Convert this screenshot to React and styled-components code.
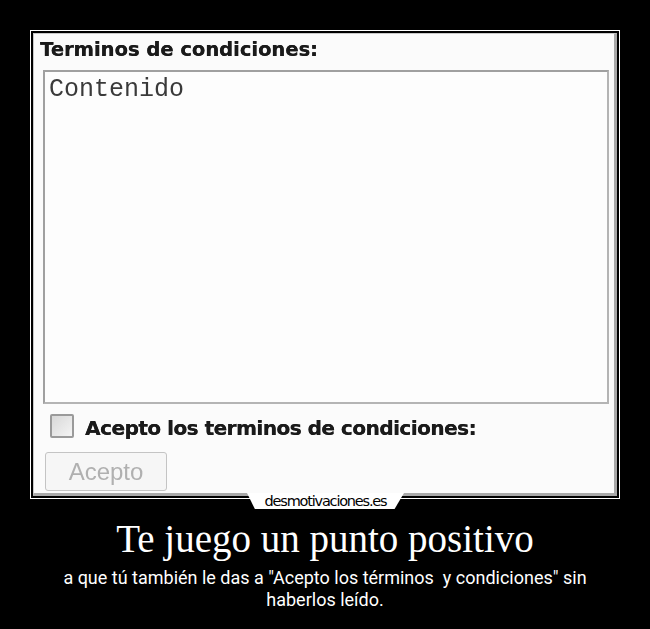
import React from 'react';
import styled, { createGlobalStyle } from 'styled-components';

const GlobalStyle = createGlobalStyle`
  body {
    margin: 0;
    background: #000;
  }
`;

const Page = styled.div`
  width: 650px;
  height: 629px;
  background: #000;
  padding-top: 30px;
  box-sizing: border-box;
  overflow: hidden;
`;

const Frame = styled.div`
  position: relative;
  width: 590px;
  height: 469px;
  margin-left: 30px;
  box-sizing: border-box;
  border: 1px solid #fff;
  padding: 2px;
  background: #000;
`;

const Shot = styled.div`
  height: 100%;
  box-sizing: border-box;
  background: #fbfbfb;
  border: 1px solid #c8c8c8;
  border-right: 3px solid #a9a9a9;
  border-bottom: 3px solid #a9a9a9;
  display: flex;
  flex-direction: column;
  filter: blur(0.35px);
`;

const Heading = styled.div`
  font-family: 'DejaVu Sans', Verdana, sans-serif;
  font-weight: bold;
  font-size: 19.5px;
  letter-spacing: 0;
  color: #1a1a1a;
  text-shadow: 0.3px 0 0 #1a1a1a;
  margin: 4px 0 0 6px;
  line-height: 24px;
`;

const TextArea = styled.div`
  margin: 8px 0 0 9px;
  width: 566px;
  height: 334px;
  box-sizing: border-box;
  border: 2px solid #b4b4b4;
  border-top-color: #a0a0a0;
  border-left-color: #a0a0a0;
  background: #fdfdfd;
  padding: 5px 4px;
  font-family: 'Liberation Mono', 'Courier New', monospace;
  font-size: 25px;
  line-height: 26px;
  color: #3a3a3a;
`;

const AgreeRow = styled.label`
  display: flex;
  align-items: center;
  gap: 11px;
  margin: 8px 0 0 16px;
`;

const Box = styled.span`
  width: 24px;
  height: 24px;
  box-sizing: border-box;
  border: 2px solid #9a9a9a;
  border-radius: 2px;
  background: linear-gradient(135deg, #d8d8d8, #f4f4f4);
`;

const AgreeText = styled.span`
  font-family: 'DejaVu Sans', Verdana, sans-serif;
  font-weight: bold;
  font-size: 20px;
  letter-spacing: -0.5px;
  color: #1a1a1a;
  text-shadow: 0.3px 0 0 #1a1a1a;
  margin-top: 4px;
`;

const Button = styled.button`
  margin: 12px 0 0 11px;
  width: 122px;
  height: 39px;
  border: 1px solid #c4c4c4;
  border-radius: 3px;
  background: #f6f6f6;
  font-family: 'Liberation Sans', Arial, sans-serif;
  font-size: 24px;
  color: #b0b0b0;
  padding: 0;
`;

const Badge = styled.div`
  position: absolute;
  left: 216px;
  bottom: -11px;
  width: 157px;
  height: 16px;
  background: #fff;
  clip-path: polygon(0 0, 100% 0, 94% 100%, 5% 100%);
  display: flex;
  align-items: center;
  justify-content: center;
  font-family: 'DejaVu Sans', sans-serif;
  font-size: 14.5px;
  letter-spacing: -1.2px;
  color: #000;
  line-height: 16px;
`;

const Caption = styled.div`
  text-align: center;
  color: #fff;
  padding: 0 40px;
`;

const Title = styled.h1`
  margin: 17px 0 0;
  font-family: 'Liberation Serif', 'Times New Roman', serif;
  font-weight: normal;
  font-size: 39px;
  line-height: 46px;
`;

const Subtitle = styled.p`
  margin: 5px 0 0;
  font-family: Roboto, 'Liberation Sans', sans-serif;
  font-size: 18px;
  line-height: 22px;
  white-space: pre-wrap;
`;

export default function App() {
  return (
    <Page>
      <GlobalStyle />
      <Frame>
        <Shot>
          <Heading>Terminos de condiciones:</Heading>
          <TextArea>Contenido</TextArea>
          <AgreeRow>
            <Box />
            <AgreeText>Acepto los terminos de condiciones:</AgreeText>
          </AgreeRow>
          <Button disabled>Acepto</Button>
        </Shot>
        <Badge>desmotivaciones.es</Badge>
      </Frame>
      <Caption>
        <Title>Te juego un punto positivo</Title>
        <Subtitle>
          a que tú también le das a "Acepto los términos  y condiciones" sin haberlos leído.
        </Subtitle>
      </Caption>
    </Page>
  );
}
